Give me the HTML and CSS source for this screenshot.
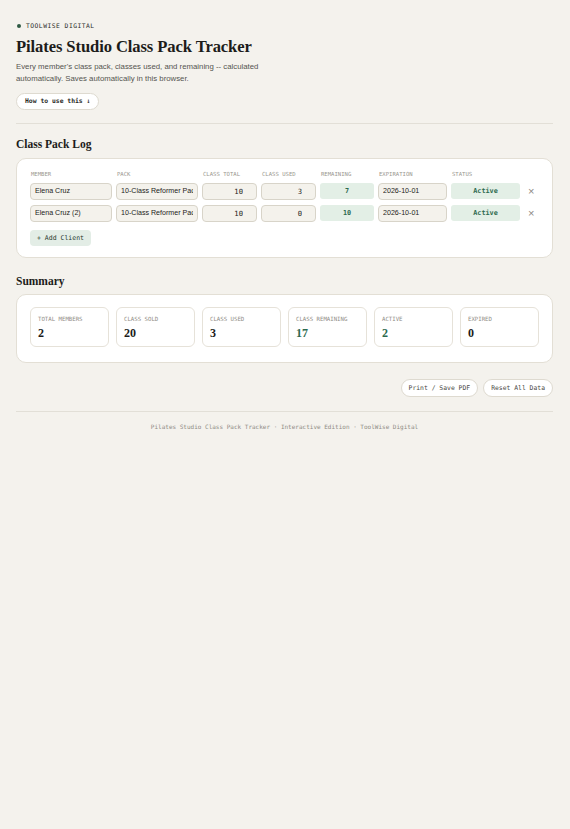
FILE: index.html
```html
<!DOCTYPE html>
<html>
<head>
    <meta charset="utf-8">
    <title>Pilates Studio Class Pack Tracker</title>
    <link rel="stylesheet" href="styles.css">
</head>
<body>
    <div class="page">
        <header class="intro">
            <div class="brand"><span class="brand-dot"></span>TOOLWISE DIGITAL</div>
            <h1>Pilates Studio Class Pack Tracker</h1>
            <p class="lede">Every member's class pack, classes used, and remaining -- calculated automatically. Saves automatically in this browser.</p>
            <button class="pill-btn howto">How to use this ↓</button>
        </header>

        <section class="block">
            <h2>Class Pack Log</h2>
            <div class="card">
                <div class="log-grid">
                    <div class="col-label">Member</div>
                    <div class="col-label">Pack</div>
                    <div class="col-label">Class Total</div>
                    <div class="col-label">Class Used</div>
                    <div class="col-label">Remaining</div>
                    <div class="col-label">Expiration</div>
                    <div class="col-label">Status</div>
                    <div></div>

                    <input class="field" value="Elena Cruz">
                    <input class="field" value="10-Class Reformer Pack">
                    <input class="field num" value="10">
                    <input class="field num" value="3">
                    <div class="tag">7</div>
                    <input class="field" value="2026-10-01">
                    <div class="tag status">Active</div>
                    <button class="remove">×</button>

                    <input class="field" value="Elena Cruz (2)">
                    <input class="field" value="10-Class Reformer Pack">
                    <input class="field num" value="10">
                    <input class="field num" value="0">
                    <div class="tag">10</div>
                    <input class="field" value="2026-10-01">
                    <div class="tag status">Active</div>
                    <button class="remove">×</button>
                </div>
                <button class="add-btn">+ Add Client</button>
            </div>
        </section>

        <section class="block summary-block">
            <h2>Summary</h2>
            <div class="card summary">
                <div class="stats">
                    <div class="stat"><div class="stat-label">Total Members</div><div class="stat-value">2</div></div>
                    <div class="stat"><div class="stat-label">Class Sold</div><div class="stat-value">20</div></div>
                    <div class="stat"><div class="stat-label">Class Used</div><div class="stat-value">3</div></div>
                    <div class="stat"><div class="stat-label">Class Remaining</div><div class="stat-value good">17</div></div>
                    <div class="stat"><div class="stat-label">Active</div><div class="stat-value good">2</div></div>
                    <div class="stat"><div class="stat-label">Expired</div><div class="stat-value">0</div></div>
                </div>
            </div>
        </section>

        <div class="actions">
            <button class="pill-btn">Print / Save PDF</button>
            <button class="pill-btn">Reset All Data</button>
        </div>

        <footer class="foot">Pilates Studio Class Pack Tracker · Interactive Edition · ToolWise Digital</footer>
    </div>
</body>
</html>
```

FILE: styles.css
```css
/* Class pack tracker - small print-friendly layout */
body {
    margin: 0;
    background: #f4f2ed;
    color: #1c1c1a;
    font-family: "Liberation Sans", Arial, sans-serif;
}

.page {
    padding: 22px 17px 40px 16px;
}

.intro {
    padding-bottom: 13px;
    border-bottom: 1px solid #e2dfd7;
}

.brand {
    display: flex;
    align-items: center;
    gap: 5px;
    font-family: "DejaVu Sans Mono", monospace;
    font-size: 6.3px;
    letter-spacing: 0.5px;
    color: #2b2b28;
    padding-left: 1px;
}

.brand-dot {
    width: 4px;
    height: 4px;
    border-radius: 50%;
    background: #2d5a43;
}

h1 {
    font-family: "Liberation Serif", "Times New Roman", serif;
    font-size: 16.6px;
    margin: 8px 0 4px 0;
    letter-spacing: -0.1px;
}

.lede {
    font-size: 7.8px;
    line-height: 12px;
    color: #555550;
    margin: 0 0 4px 0;
    max-width: 262px;
}

.pill-btn {
    font-family: "DejaVu Sans Mono", monospace;
    font-size: 6.4px;
    color: #4a4944;
    background: #fff;
    border: 1px solid #dedad0;
    border-radius: 10px;
    height: 18px;
    padding: 0 7px;
    cursor: pointer;
}

.howto {
    font-weight: bold;
    color: #2b2b28;
    height: 17px;
    padding: 0 8px;
}

.block h2 {
    font-family: "Liberation Serif", "Times New Roman", serif;
    font-size: 11.5px;
    margin: 14px 0 8px 0;
}

.summary-block h2 {
    margin: 17px 0 7px 0;
}

.card {
    background: #fff;
    border: 1.5px solid #e3dfd5;
    border-radius: 10px;
    padding: 12px 13px 11px 13px;
}

.card.summary {
    padding: 12px 13px 15px 13px;
}

.log-grid {
    display: grid;
    grid-template-columns: 82px 82px 55px 55px 54px 69px 69px 20px;
    column-gap: 4px;
    row-gap: 5px;
    align-items: center;
}

.col-label {
    font-family: "DejaVu Sans Mono", monospace;
    font-size: 5.6px;
    text-transform: uppercase;
    color: #9a978f;
    padding-left: 1px;
    margin-bottom: 1px;
}

.field {
    box-sizing: border-box;
    width: 100%;
    height: 17px;
    background: #f4f2ec;
    border: 1px solid #d8d4c9;
    border-radius: 4px;
    padding: 0 4px;
    font-family: "Liberation Sans", Arial, sans-serif;
    font-size: 7.1px;
    color: #1c1c1a;
    outline: none;
}

.field.num {
    font-family: "DejaVu Sans Mono", monospace;
    font-size: 7.2px;
    text-align: right;
    padding-right: 13px;
}

.tag {
    height: 16px;
    line-height: 16px;
    background: #e3efe6;
    color: #2d6a4f;
    border-radius: 3px;
    text-align: center;
    font-family: "DejaVu Sans Mono", monospace;
    font-size: 6.8px;
    font-weight: bold;
}

.remove {
    justify-self: start;
    margin-left: 4px;
    background: none;
    border: none;
    color: #8d8a83;
    font-size: 11px;
    padding: 0;
    cursor: pointer;
}

.add-btn {
    margin-top: 8px;
    height: 16px;
    padding: 0 7px;
    background: #e3ede6;
    color: #2b3a31;
    border: none;
    border-radius: 4px;
    font-family: "DejaVu Sans Mono", monospace;
    font-size: 6.5px;
    cursor: pointer;
}

.stats {
    display: grid;
    grid-template-columns: repeat(6, 1fr);
    gap: 7px;
}

.stat {
    border: 1px solid #e6e2d9;
    border-radius: 6px;
    padding: 8px 7px 5px 7px;
}

.stat-label {
    font-family: "DejaVu Sans Mono", monospace;
    font-size: 5.7px;
    text-transform: uppercase;
    color: #8f8c85;
    margin-bottom: 4px;
}

.stat-value {
    font-family: "Liberation Serif", "Times New Roman", serif;
    font-size: 12px;
    font-weight: bold;
    color: #1c1c1a;
}

.stat-value.good {
    color: #2d6a4f;
}

.actions {
    display: flex;
    justify-content: flex-end;
    gap: 5px;
    margin-top: 16px;
    padding-bottom: 14px;
    border-bottom: 1px solid #e2dfd7;
}

.foot {
    text-align: center;
    font-family: "DejaVu Sans Mono", monospace;
    font-size: 6px;
    color: #8f8c85;
    margin-top: 11px;
}
```
